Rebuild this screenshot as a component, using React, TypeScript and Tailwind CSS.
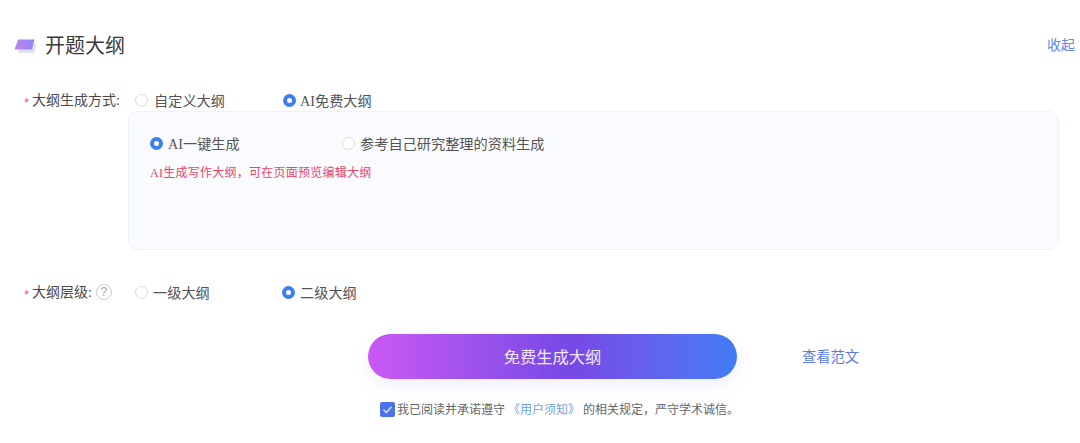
import React from "react";

const font = { fontFamily: '"Liberation Serif", "Noto Sans CJK SC", serif' };

function Radio({ on }: { on?: boolean }) {
  return on ? (
    <span className="block h-[13px] w-[13px] shrink-0 rounded-full border-[4px] border-[#3b7ff0] bg-white" />
  ) : (
    <span className="block h-[13px] w-[13px] shrink-0 rounded-full border border-[#dcdcdc] bg-white" />
  );
}

function Option({ on, children, className }: { on?: boolean; children: React.ReactNode; className: string }) {
  return (
    <div className={`flex items-center ${className}`}>
      <Radio on={on} />
      <span className="mt-[2px] whitespace-nowrap text-[14.2px] leading-[20px] text-[#555555]">{children}</span>
    </div>
  );
}

function Label({ children }: { children: React.ReactNode }) {
  return (
    <div className="mt-[2px] flex items-center whitespace-nowrap text-[14px] leading-[20px] text-[#4a4a4a]">
      <span className="w-[8px] pt-[4px] font-['Liberation_Sans'] text-[13px] text-[#e8587a]">*</span>
      {children}
    </div>
  );
}

export default function App() {
  return (
    <div style={font} className="h-[443px] w-[1080px] overflow-hidden bg-white">
      <header className="mt-[34px] flex h-[24px] items-center justify-between pl-[14px] pr-[5px]">
        <div className="flex items-center gap-[8px]">
          <svg width="23" height="15" viewBox="0 0 23 15" className="shrink-0 blur-[0.4px]">
            <path d="M6 4.5 H22.5 L20 14 H4 Z" fill="#e0ddfb" />
            <defs>
              <linearGradient id="logo" x1="0" x2="1" y1="0" y2="0">
                <stop offset="0" stopColor="#c083f0" />
                <stop offset="1" stopColor="#8f88f3" />
              </linearGradient>
            </defs>
            <path d="M4 1 Q4.3 0.5 5 0.5 H20.5 L18 10.5 H1.5 Q0.5 10.5 0.8 9.5 Z" fill="url(#logo)" />
          </svg>
          <h1 className="whitespace-nowrap text-[20px] font-normal leading-[24px] text-[#3a3a3a]">开题大纲</h1>
        </div>
        <a className="whitespace-nowrap text-[14px] leading-[20px] text-[#5f86ea]">收起</a>
      </header>

      <div className="mt-[32px] flex h-[20px] items-center pl-[24px]">
        <div className="w-[111px]">
          <Label>大纲生成方式:</Label>
        </div>
        <Option className="w-[148px] gap-[6px]">自定义大纲</Option>
        <Option on className="gap-[4px]">AI免费大纲</Option>
      </div>

      <div className="ml-[128px] mt-[1px] h-[139px] w-[931px] rounded-[10px] border border-[#eef1f7] bg-[#fafbfe] pl-[21px] pt-[21px]">
        <div className="flex h-[20px] items-center">
          <Option on className="w-[192px] gap-[5px]">AI一键生成</Option>
          <Option className="gap-[5px]">参考自己研究整理的资料生成</Option>
        </div>
        <p className="mt-[11px] whitespace-nowrap text-[12px] leading-[18px] tracking-[0.25px] text-[#e5476a]">
          AI生成写作大纲，可在页面预览编辑大纲
        </p>
      </div>

      <div className="mt-[32px] flex h-[20px] items-center pl-[24px]">
        <div className="flex w-[111px] items-center gap-[4px]">
          <Label>大纲层级:</Label>
          <span className="flex h-[16px] w-[16px] items-center justify-center rounded-full border-[1.5px] border-[#c8c8c8] font-['Liberation_Sans'] text-[12px] leading-none text-[#a0a0a0]">
            ?
          </span>
        </div>
        <Option className="w-[147px] gap-[5px]">一级大纲</Option>
        <Option on className="gap-[5px]">二级大纲</Option>
      </div>

      <div className="mt-[32px] flex items-center pl-[368px]">
        <button className="h-[45px] w-[369px] rounded-full bg-gradient-to-r from-[#cb58f3] via-[#7648e6] via-55% to-[#3f7bf5] pt-[4px] text-[16.3px] text-[#f3e9ff] shadow-[0_6px_16px_rgba(120,120,230,0.12)]">
          免费生成大纲
        </button>
        <a className="ml-[65px] mt-[2px] whitespace-nowrap text-[14.25px] text-[#5a7be6]">查看范文</a>
      </div>

      <div className="mt-[21px] flex items-center pl-[380px]">
        <span className="flex h-[15px] w-[15px] items-center justify-center rounded-[2px] bg-[#4a72ea]">
          <svg width="11" height="11" viewBox="0 0 11 11" fill="none">
            <path d="M1.5 5.8 L4.3 8.5 L9.5 2.8" stroke="#dfe8ff" strokeWidth="1.4" />
          </svg>
        </span>
        <p className="ml-[2px] mt-[2px] whitespace-nowrap text-[12px] leading-[16px] text-[#666666]">
          我已阅读并承诺遵守 <span className="text-[#6f9fe6]">《用户须知》</span> 的相关规定，严守学术诚信。
        </p>
      </div>
    </div>
  );
}
